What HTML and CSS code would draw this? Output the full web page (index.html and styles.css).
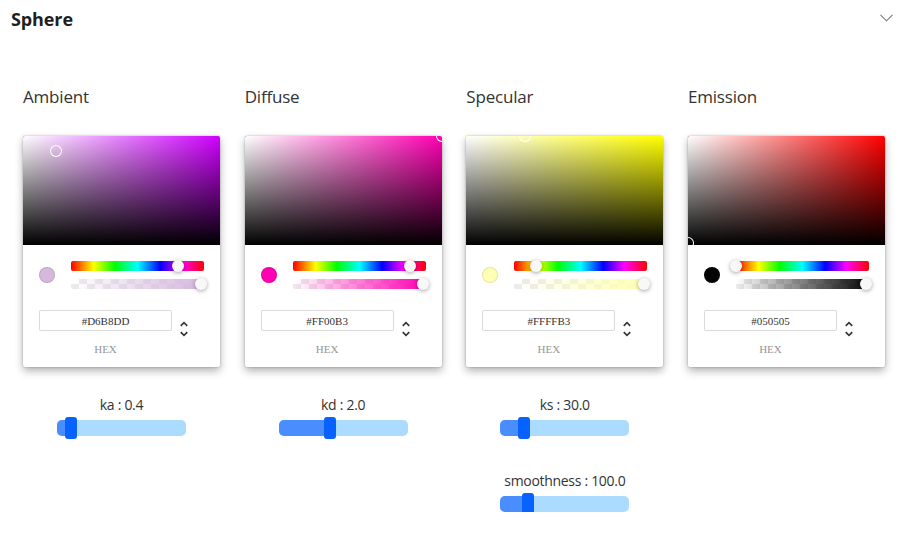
FILE: index.html
```html
<!DOCTYPE html>
<html lang="en">
<head>
<meta charset="utf-8">
<title>Sphere</title>
<link rel="stylesheet" href="styles.css">
</head>
<body>
<div class="panel">
  <div class="header">
    <span class="title">Sphere</span>
    <svg class="chev" width="13" height="8" viewBox="0 0 13 8"><polyline points="0.5,0.8 6.5,6.8 12.5,0.8" fill="none" stroke="#7a7a7a" stroke-width="1.1"/></svg>
  </div>
  <div class="grid">
    <!-- Ambient -->
    <div class="col">
      <div class="col-label">Ambient</div>
      <div class="picker">
        <div class="sat" style="background-color: hsl(288.6, 100%, 50%)">
          <div class="sat-white"></div><div class="sat-black"></div>
          <div class="sat-ptr" style="left: 16.8%; top: 13.8%"></div>
        </div>
        <div class="pbody">
          <div class="controls">
            <div class="color"><div class="swatch" style="background: #D6B8DD"></div></div>
            <div class="toggles">
              <div class="hue"><div class="bar-ptr" style="left: 80.4%"></div></div>
              <div class="alpha"><div class="alpha-fill" style="background: linear-gradient(to right, rgba(214,184,221,0), rgb(214,184,221))"></div><div class="bar-ptr" style="left: 97.7%"></div></div>
            </div>
          </div>
          <div class="fields">
            <div class="field"><input class="hex-input" value="#D6B8DD"><span class="hex-label">HEX</span></div>
            <div class="toggle"><svg class="updown" viewBox="0 0 24 24"><path fill="#333" d="M12,18.17L8.83,15L7.42,16.41L12,21L16.59,16.41L15.17,15M12,5.83L15.17,9L16.58,7.59L12,3L7.41,7.59L8.83,9L12,5.83Z"/></svg></div>
          </div>
        </div>
      </div>
      <div class="sgroup">
        <div class="slabel">ka : 0.4</div>
        <div class="slider"><div class="sfill" style="width: 14px"></div><div class="thumb" style="left: 14px"></div></div>
      </div>
    </div>
    <!-- Diffuse -->
    <div class="col">
      <div class="col-label">Diffuse</div>
      <div class="picker">
        <div class="sat" style="background-color: hsl(317.9, 100%, 50%)">
          <div class="sat-white"></div><div class="sat-black"></div>
          <div class="sat-ptr" style="left: 100%; top: 0%"></div>
        </div>
        <div class="pbody">
          <div class="controls">
            <div class="color"><div class="swatch" style="background: #FF00B3"></div></div>
            <div class="toggles">
              <div class="hue"><div class="bar-ptr" style="left: 88.3%"></div></div>
              <div class="alpha"><div class="alpha-fill" style="background: linear-gradient(to right, rgba(255,0,179,0), rgb(255,0,179))"></div><div class="bar-ptr" style="left: 97.7%"></div></div>
            </div>
          </div>
          <div class="fields">
            <div class="field"><input class="hex-input" value="#FF00B3"><span class="hex-label">HEX</span></div>
            <div class="toggle"><svg class="updown" viewBox="0 0 24 24"><path fill="#333" d="M12,18.17L8.83,15L7.42,16.41L12,21L16.59,16.41L15.17,15M12,5.83L15.17,9L16.58,7.59L12,3L7.41,7.59L8.83,9L12,5.83Z"/></svg></div>
          </div>
        </div>
      </div>
      <div class="sgroup">
        <div class="slabel">kd : 2.0</div>
        <div class="slider"><div class="sfill" style="width: 51.5px"></div><div class="thumb" style="left: 51.5px"></div></div>
      </div>
    </div>
    <!-- Specular -->
    <div class="col">
      <div class="col-label">Specular</div>
      <div class="picker">
        <div class="sat" style="background-color: hsl(60, 100%, 50%)">
          <div class="sat-white"></div><div class="sat-black"></div>
          <div class="sat-ptr" style="left: 30%; top: 0%"></div>
        </div>
        <div class="pbody">
          <div class="controls">
            <div class="color"><div class="swatch" style="background: #FFFFB3"></div></div>
            <div class="toggles">
              <div class="hue"><div class="bar-ptr" style="left: 16.6%"></div></div>
              <div class="alpha"><div class="alpha-fill" style="background: linear-gradient(to right, rgba(255,255,179,0), rgb(255,255,179))"></div><div class="bar-ptr" style="left: 97.7%"></div></div>
            </div>
          </div>
          <div class="fields">
            <div class="field"><input class="hex-input" value="#FFFFB3"><span class="hex-label">HEX</span></div>
            <div class="toggle"><svg class="updown" viewBox="0 0 24 24"><path fill="#333" d="M12,18.17L8.83,15L7.42,16.41L12,21L16.59,16.41L15.17,15M12,5.83L15.17,9L16.58,7.59L12,3L7.41,7.59L8.83,9L12,5.83Z"/></svg></div>
          </div>
        </div>
      </div>
      <div class="sgroup">
        <div class="slabel">ks : 30.0</div>
        <div class="slider"><div class="sfill" style="width: 23.5px"></div><div class="thumb" style="left: 23.5px"></div></div>
      </div>
      <div class="sgroup sgroup-next">
        <div class="slabel">smoothness : 100.0</div>
        <div class="slider"><div class="sfill" style="width: 28px"></div><div class="thumb" style="left: 28px"></div></div>
      </div>
    </div>
    <!-- Emission -->
    <div class="col">
      <div class="col-label">Emission</div>
      <div class="picker">
        <div class="sat" style="background-color: hsl(0, 100%, 50%)">
          <div class="sat-white"></div><div class="sat-black"></div>
          <div class="sat-ptr" style="left: 0%; top: 98%"></div>
        </div>
        <div class="pbody">
          <div class="controls">
            <div class="color"><div class="swatch" style="background: #050505"></div></div>
            <div class="toggles">
              <div class="hue"><div class="bar-ptr" style="left: 0%"></div></div>
              <div class="alpha"><div class="alpha-fill" style="background: linear-gradient(to right, rgba(5,5,5,0), rgb(5,5,5))"></div><div class="bar-ptr" style="left: 97.7%"></div></div>
            </div>
          </div>
          <div class="fields">
            <div class="field"><input class="hex-input" value="#050505"><span class="hex-label">HEX</span></div>
            <div class="toggle"><svg class="updown" viewBox="0 0 24 24"><path fill="#333" d="M12,18.17L8.83,15L7.42,16.41L12,21L16.59,16.41L15.17,15M12,5.83L15.17,9L16.58,7.59L12,3L7.41,7.59L8.83,9L12,5.83Z"/></svg></div>
          </div>
        </div>
      </div>
    </div>
  </div>
</div>
</body>
</html>
```
FILE: styles.css
```css
* { box-sizing: border-box; }
html, body { margin: 0; padding: 0; background: #fff; }
body {
  font-family: "Open Sans", "Noto Sans", "Liberation Sans", sans-serif;
  color: #333;
  overflow: hidden;
}
.panel { width: 906px; }
.header {
  height: 40px;
  display: flex;
  align-items: center;
  justify-content: space-between;
  padding: 0 13px 2px 11px;
}
.title {
  font-size: 18px;
  font-weight: 700;
  color: #1f1f1f;
  letter-spacing: -0.1px;
}
.chev { display: block; margin-top: -2px; }
.grid {
  display: grid;
  grid-template-columns: repeat(4, 197px);
  column-gap: 24.67px;
  padding: 45px 0 0 23px;
}
.col { display: flex; flex-direction: column; }
.col-label {
  font-size: 17px;
  line-height: 24px;
  height: 24px;
  color: #333;
  margin-bottom: 27px;
  font-weight: 400;
  letter-spacing: -0.2px;
}
.picker {
  background: #fff;
  border-radius: 2px;
  box-shadow: 0 0 2px rgba(0,0,0,.3), 0 4px 8px rgba(0,0,0,.3);
  font-family: "Liberation Serif", serif;
}
.sat {
  position: relative;
  height: 109px;
  border-radius: 2px 2px 0 0;
  overflow: hidden;
}
.sat-white, .sat-black { position: absolute; inset: 0; }
.sat-white { background: linear-gradient(to right, #fff, rgba(255,255,255,0)); }
.sat-black { background: linear-gradient(to top, #000, rgba(0,0,0,0)); }
.sat-ptr {
  position: absolute;
  width: 12px; height: 12px;
  border-radius: 6px;
  box-shadow: inset 0 0 0 1px #fff;
  transform: translate(-6px, -6px);
}
.pbody { padding: 16px 16px 12px; }
.controls { display: flex; }
.color { width: 32px; }
.swatch {
  margin-top: 6px;
  width: 16px; height: 16px;
  border-radius: 8px;
  box-shadow: inset 0 0 0 1px rgba(0,0,0,.1);
}
.toggles { flex: 1; }
.hue, .alpha { position: relative; height: 10px; border-radius: 2px; }
.hue {
  margin-bottom: 8px;
  background: linear-gradient(to right, #f00 0%, #ff0 17%, #0f0 33%, #0ff 50%, #00f 67%, #f0f 83%, #f00 100%);
}
.alpha {
  background-color: #fff;
  background-image: conic-gradient(rgba(0,0,0,.08) 0 25%, transparent 0 50%, rgba(0,0,0,.08) 0 75%, transparent 0);
  background-size: 16px 16px;
  background-position: 0 -3px;
}
.alpha-fill { position: absolute; inset: 0; border-radius: 2px; }
.bar-ptr {
  position: absolute;
  top: -1px;
  width: 12px; height: 12px;
  border-radius: 6px;
  background: #f8f8f8;
  box-shadow: 0 1px 4px 0 rgba(0,0,0,.37);
  transform: translateX(-6px);
}
.fields { display: flex; padding-top: 21px; }
.field { flex: 1; display: flex; flex-direction: column; }
.hex-input {
  width: 100%;
  height: 21px;
  padding: 0;
  border: none;
  border-radius: 2px;
  box-shadow: inset 0 0 0 1px #dadada;
  font-family: "Liberation Serif", serif;
  font-size: 11px;
  color: #333;
  text-align: center;
  background: #fff;
  outline: none;
}
.hex-label {
  display: block;
  margin-top: 13px;
  font-size: 11px;
  line-height: 11px;
  color: #969696;
  text-align: center;
  text-transform: uppercase;
}
.toggle { width: 32px; padding-left: 2px; }
.updown { display: block; width: 20px; height: 20px; margin-top: 9px; }
.sgroup {
  margin-top: 28px;
  display: flex;
  flex-direction: column;
  align-items: center;
}
.sgroup-next { margin-top: 35px; }
.slabel {
  font-size: 14px;
  line-height: 20px;
  height: 20px;
  color: #333;
  letter-spacing: -0.3px;
}
.slider {
  position: relative;
  margin-top: 5px;
  width: 129px;
  height: 16px;
  border-radius: 5px;
  background: #abdcff;
}
.sfill {
  position: absolute;
  left: 0; top: 0; bottom: 0;
  border-radius: 5px 0 0 5px;
  background: #4a8dff;
}
.thumb {
  position: absolute;
  top: -3px;
  width: 12px;
  height: 22px;
  border-radius: 3px;
  background: #0862ff;
  transform: translateX(-6px);
}
```
